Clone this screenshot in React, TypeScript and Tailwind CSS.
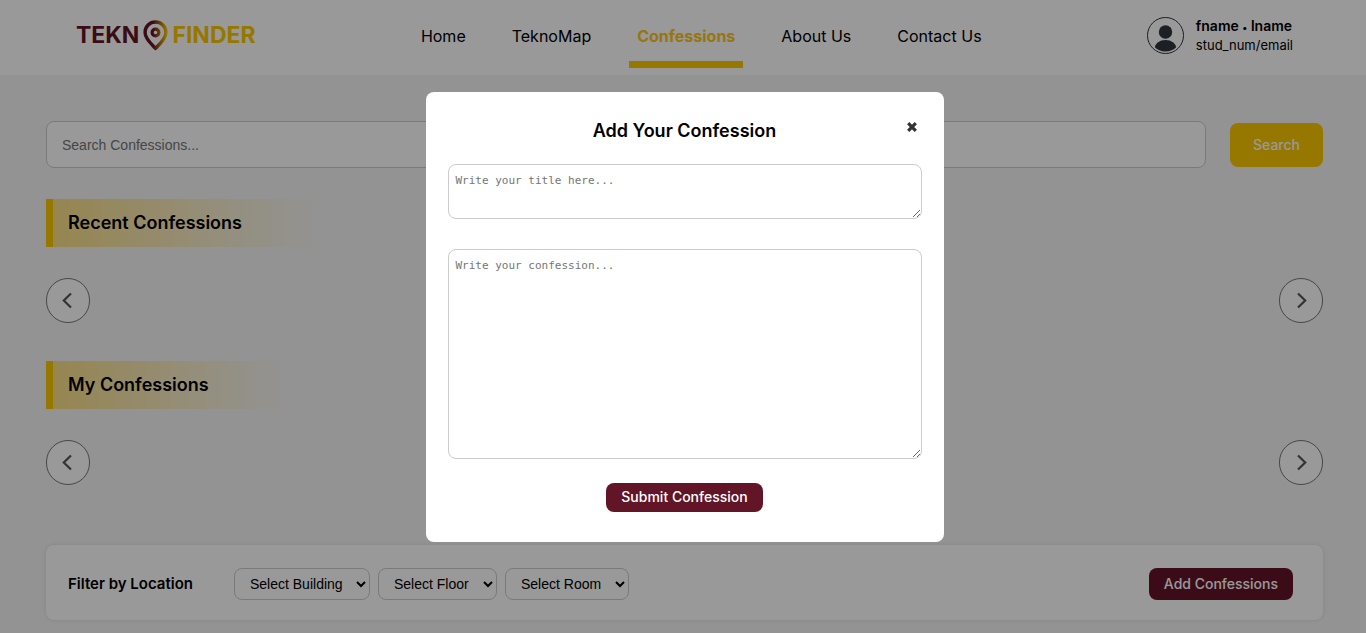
import React from "react";

const navLinks = ["Home", "TeknoMap", "Confessions", "About Us", "Contact Us"];

function Logo() {
  return (
    <a href="#home" className="flex items-center gap-1 text-[23px] leading-8 font-bold">
      <span className="text-[#631528]">TEKN</span>
      <svg width="25" height="31" viewBox="0 0 25 31" fill="none" aria-hidden="true">
        <defs>
          <linearGradient id="pin" x1="0" y1="0" x2="25" y2="0" gradientUnits="userSpaceOnUse">
            <stop offset="0.4" stopColor="#631528" />
            <stop offset="0.95" stopColor="#fac600" />
          </linearGradient>
        </defs>
        <path
          d="M12.5 2C6.6 2 2.1 6.5 2.1 12.2c0 3.6 1.9 6.6 4.3 9.6 2 2.4 4.2 4.5 6.1 6.6 1.9-2.1 4.1-4.2 6.1-6.6 2.4-3 4.3-6 4.3-9.6C22.9 6.5 18.4 2 12.5 2Z"
          stroke="url(#pin)"
          strokeWidth="3.4"
          strokeLinejoin="round"
        />
        <circle cx="12.5" cy="12.5" r="3.4" stroke="url(#pin)" strokeWidth="3.2" />
      </svg>
      <span className="text-[#fac600]">FINDER</span>
    </a>
  );
}

function Header() {
  return (
    <header className="flex h-[75px] items-center justify-between bg-white pr-[73px] pl-[76px]">
      <div className="pb-[5px]">
        <Logo />
      </div>
      <nav className="flex gap-[30px] self-stretch">
        {navLinks.map((name) => {
          const active = name === "Confessions";
          return (
            <a
              key={name}
              href={"#" + name}
              aria-current={active ? "page" : undefined}
              className={
                active
                  ? "mb-[7px] border-b-[7px] border-[#fac600] px-2 pt-6 text-base font-bold text-[#fcc419]"
                  : "mb-[7px] border-b-[7px] border-transparent px-2 pt-6 text-base text-black"
              }
            >
              {name}
            </a>
          );
        })}
      </nav>
      <div className="flex items-start gap-3 pb-1">
        <svg width="37" height="37" viewBox="0 0 37 37" aria-hidden="true">
          <defs>
            <clipPath id="face">
              <circle cx="18.5" cy="18.5" r="16" />
            </clipPath>
          </defs>
          <circle cx="18.5" cy="18.5" r="18" fill="none" stroke="#30343c" />
          <circle cx="18.5" cy="15" r="6.7" fill="#30343c" />
          <ellipse cx="18.5" cy="31.5" rx="11" ry="8.5" fill="#30343c" clipPath="url(#face)" />
        </svg>
        <div>
          <p className="text-sm leading-[18px] font-semibold">
            fname <span className="text-[10px]">•</span> lname
          </p>
          <p className="text-[13px] leading-[18px]">stud_num/email</p>
        </div>
      </div>
    </header>
  );
}

function ArrowButton({ direction }: { direction: "left" | "right" }) {
  return (
    <button
      type="button"
      aria-label={direction === "left" ? "Previous" : "Next"}
      className="flex h-[45px] w-11 items-center justify-center rounded-full border border-[#777] bg-white text-[#555]"
    >
      <svg width="12" height="18" viewBox="0 0 12 18" fill="none" stroke="currentColor" strokeWidth="2.2">
        <path d={direction === "left" ? "M9 1.5 1.8 8.5 9 15.500" : "M3 1.500 10.200 8.500 3 15.500"} />
      </svg>
    </button>
  );
}

function Carousel({ title }: { title: string }) {
  return (
    <section className="flex flex-col gap-[31px]">
      <h2 className="self-start border-l-[7px] border-[#fac600] bg-linear-to-r from-[#fbdf85] to-[#f5f5f5] py-[9px] pr-[76px] pl-[15px] text-lg leading-[30px] font-semibold">
        {title}
      </h2>
      <div className="flex justify-between">
        <ArrowButton direction="left" />
        <ArrowButton direction="right" />
      </div>
    </section>
  );
}

function Picker({ label, width }: { label: string; width: string }) {
  return (
    <select
      aria-label={label}
      className={
        "h-8 rounded-lg border border-[#ccc] bg-white pl-[11px] font-['Liberation_Sans',Arial,sans-serif] text-sm text-black " +
        width
      }
    >
      <option>{label}</option>
    </select>
  );
}

function ConfessionDialog() {
  const box =
    "block w-full resize rounded-lg border border-[#ccc] bg-white px-[7px] py-2 font-['DejaVu_Sans_Mono',monospace] text-[11px] leading-4 placeholder:text-[#757575]";
  return (
    <div className="fixed inset-0 flex items-center justify-center bg-black/40 pr-[43px] pl-[46px]">
      <form
        role="dialog"
        aria-modal="true"
        aria-labelledby="dialog-title"
        className="relative w-full max-w-[518px] rounded-lg bg-white px-[22px] pt-[25px] pb-[30px]"
      >
        <h2 id="dialog-title" className="mb-[19px] text-center text-lg leading-7 font-semibold">
          Add Your Confession
        </h2>
        <button
          type="button"
          aria-label="Close"
          className="absolute top-6 right-6 flex h-[22px] w-4 items-center justify-center text-[#333]"
        >
          <svg width="10" height="10" viewBox="0 0 10 10" stroke="currentColor" strokeWidth="3.2">
            <path d="M1.2 1.2 8.8 8.8M8.8 1.2 1.2 8.8" />
          </svg>
        </button>
        <textarea aria-label="Title" placeholder="Write your title here..." className={box + " mb-[30px] h-[55px]"} />
        <textarea aria-label="Confession" placeholder="Write your confession..." className={box + " mb-6 h-[210px]"} />
        <button
          type="submit"
          className="mx-auto block rounded-lg bg-[#631528] px-[15px] pt-1 pb-[5px] text-sm font-medium text-white"
        >
          Submit Confession
        </button>
      </form>
    </div>
  );
}

export default function App() {
  return (
    <div className="min-h-screen bg-[#f5f5f5] font-['Inter',sans-serif] text-black">
      <Header />
      <main className="flex flex-col pt-[46px] pr-[43px] pb-3 pl-[46px]">
        <form role="search" className="mb-[31px] flex items-center gap-6">
          <input
            type="search"
            aria-label="Search Confessions"
            placeholder="Search Confessions..."
            className="h-[47px] min-w-0 flex-1 rounded-lg border border-[#ccc] bg-white px-[15px] font-['Liberation_Sans',Arial,sans-serif] text-sm placeholder:text-[#757575]"
          />
          <button
            type="submit"
            className="h-11 rounded-lg bg-[#fac600] px-[23px] text-sm font-medium text-white"
          >
            Search
          </button>
        </form>
        <div className="mb-[60px] flex flex-col gap-[38px]">
          <Carousel title="Recent Confessions" />
          <Carousel title="My Confessions" />
        </div>
        <section className="flex items-center gap-2 rounded-lg bg-white pt-[23px] pr-[30px] pb-5 pl-[22px] shadow-[0_0_4px_rgba(0,0,0,0.1)]">
          <h3 className="mr-[33px] text-[15px] leading-6 font-semibold">Filter by Location</h3>
          <Picker label="Select Building" width="w-[136px]" />
          <Picker label="Select Floor" width="w-[119px]" />
          <Picker label="Select Room" width="w-[124px]" />
          <button
            type="button"
            className="ml-auto h-8 rounded-lg bg-[#631528] px-[15px] text-sm font-medium text-white"
          >
            Add Confessions
          </button>
        </section>
      </main>
      <ConfessionDialog />
    </div>
  );
}
